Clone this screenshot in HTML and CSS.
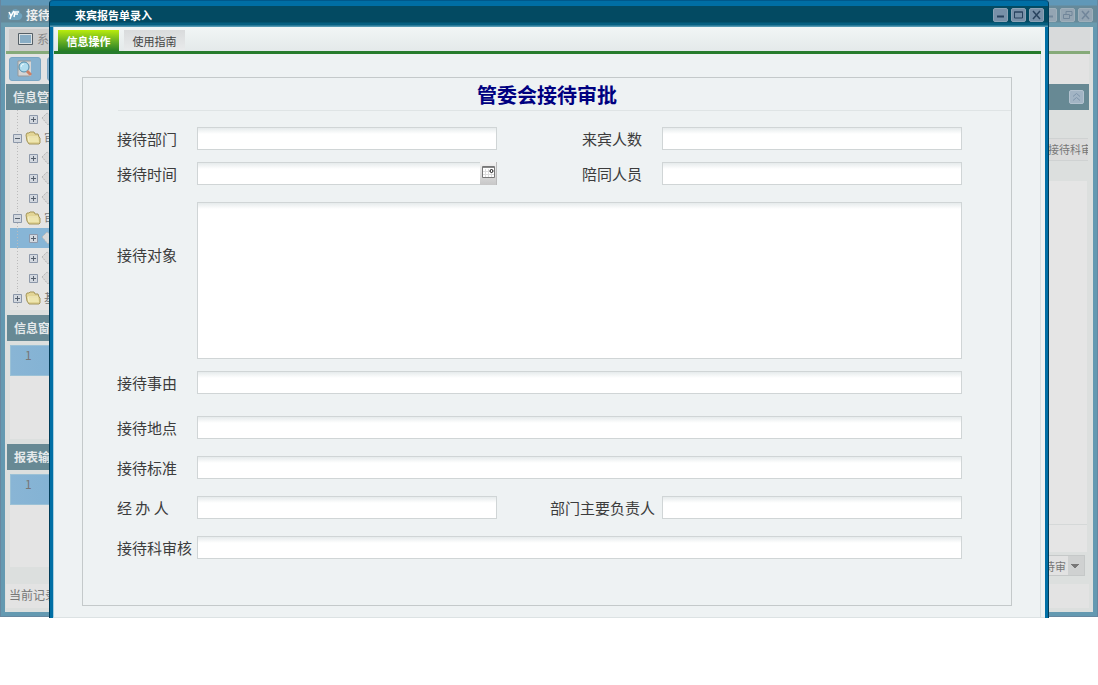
FILE: index.html
```html
<!DOCTYPE html>
<html lang="zh-CN">
<head>
<meta charset="utf-8">
<title>来宾报告单录入</title>
<link rel="stylesheet" href="styles.css">
</head>
<body>
<svg class="defs" aria-hidden="true">
  <symbol id="folder" viewBox="0 0 16 14"><path d="M2 10L1 4l1-2h2l1-1h4l1 2h3l1 3 1 1v5l-1 1H4z" fill="#e2d596" stroke="#a5965a"/><path d="M3 7h10l1 4H4z" fill="#eee6b0"/><path d="M4 11L3 6h10" fill="none" stroke="#f4efc8"/></symbol>
  <symbol id="plus" viewBox="0 0 9 9"><path d="M.5.5h8v8h-8z" fill="#d3d8df" stroke="#8d98aa"/><path d="M2 4.500h5M4.500 2v5" stroke="#56606e"/></symbol>
  <symbol id="minus" viewBox="0 0 9 9"><path d="M.5.5h8v8h-8z" fill="#d3d8df" stroke="#8d98aa"/><path d="M2 4.500h5" stroke="#56606e"/></symbol>
  <symbol id="leaf" viewBox="0 0 14 14"><path d="M1 6l5-5 7 5-6 7z" fill="#d9d9d9" stroke="#b5b5b5" stroke-dasharray="2 1"/></symbol>
  <symbol id="min" viewBox="0 0 15 14"><path d="M4 8.500h7" stroke="currentColor" stroke-width="2"/></symbol>
  <symbol id="max" viewBox="0 0 15 14"><path d="M3.500 4h8v6h-8zM3 4h9" fill="none" stroke="currentColor"/></symbol>
  <symbol id="restore" viewBox="0 0 15 14"><path d="M3.500 6.500h6v4h-6zM6 6V3.500h6v4h-2" fill="none" stroke="currentColor"/></symbol>
  <symbol id="close" viewBox="0 0 15 14"><path d="M4 3l7 8M11 3l-7 8" stroke="currentColor" stroke-width="1.500"/></symbol>
</svg>
<main class="desktop">
  <section class="app" aria-label="接待">
    <header class="app-title">
      <svg class="logo" viewBox="0 0 16 13"><path d="M3 12Q0 11 1 7q0-3 3-3 3-5 7-2 2 0 2 3 3 1 2 4-1 3-4 3z" fill="#6fa3bf"/><path d="M2 4l2 4 3-5M4 8l-1 3M7 9l1-5h4M8 6h3" fill="none" stroke="#fff" stroke-width="1.500"/></svg>
      <span class="app-name">接待</span>
      <div class="controls">
        <button aria-label="最小化"><svg><use href="#min"/></svg></button>
        <button aria-label="还原"><svg><use href="#restore"/></svg></button>
        <button aria-label="关闭"><svg><use href="#close"/></svg></button>
      </div>
    </header>
    <div class="app-body">
      <nav class="app-tabs"><a href="#"><svg class="monitor" viewBox="0 0 15 12"><path d="M.5.5h14v11H.5z" fill="#dce1e3" stroke="#555f66"/><path d="M2 2h11v8H2z" fill="#89adc5"/></svg>系统</a></nav>
      <div class="toolbar">
        <button aria-label="查询"><svg class="search" viewBox="0 0 18 18"><path d="M2 1h13v15H2z" fill="#d5d5d5"/><path d="M2 16V1h13M2 16h11" fill="none" stroke="#999"/><circle cx="8" cy="7" r="5" fill="#b0dcee" stroke="#508cab"/><path d="M5 7q0-3 3-3" fill="none" stroke="#e6f6fb"/><path d="M11 11l4 4" stroke="#cb8066" stroke-width="3"/></svg></button>
        <button aria-label="工具"></button>
      </div>
      <div class="panels">
        <aside class="side">
          <h2 class="bar">信息管理</h2>
          <ul class="tree">
            <li class="child"><svg class="box"><use href="#plus"/></svg><svg class="leaf"><use href="#leaf"/></svg></li>
            <li><svg class="box"><use href="#minus"/></svg><svg class="folder"><use href="#folder"/></svg>审批</li>
            <li class="child"><svg class="box"><use href="#plus"/></svg><svg class="leaf"><use href="#leaf"/></svg></li>
            <li class="child"><svg class="box"><use href="#plus"/></svg><svg class="leaf"><use href="#leaf"/></svg></li>
            <li class="child"><svg class="box"><use href="#plus"/></svg><svg class="leaf"><use href="#leaf"/></svg></li>
            <li><svg class="box"><use href="#minus"/></svg><svg class="folder"><use href="#folder"/></svg>审批</li>
            <li class="child selected"><svg class="box"><use href="#plus"/></svg><svg class="leaf"><use href="#leaf"/></svg></li>
            <li class="child"><svg class="box"><use href="#plus"/></svg><svg class="leaf"><use href="#leaf"/></svg></li>
            <li class="child"><svg class="box"><use href="#plus"/></svg><svg class="leaf"><use href="#leaf"/></svg></li>
            <li><svg class="box"><use href="#plus"/></svg><svg class="folder"><use href="#folder"/></svg>基础</li>
          </ul>
          <h2 class="bar inset">信息窗口</h2>
          <div class="list"><div class="list-row">1</div></div>
          <h2 class="bar inset">报表输出</h2>
          <div class="list"><div class="list-row">1</div></div>
        </aside>
        <section class="work">
          <div class="bar work-bar"><button aria-label="收起"><svg viewBox="0 0 15 14"><path d="M4 6.500l3.500-3 3.500 3M4 10.500l3.500-3 3.500 3" fill="none" stroke="currentColor"/></svg></button></div>
          <div class="column-head"><span>接待科审</span></div>
          <div class="records"></div>
          <div class="summary"></div>
          <div class="filter"><select aria-label="状态"><option>待审</option></select></div>
        </section>
      </div>
      <footer class="status">当前记录</footer>
    </div>
  </section>

  <section class="dialog" role="dialog" aria-labelledby="dialog-title">
    <header class="dialog-title">
      <h1 id="dialog-title">来宾报告单录入</h1>
      <div class="controls">
        <button aria-label="最小化"><svg><use href="#min"/></svg></button>
        <button aria-label="最大化"><svg><use href="#max"/></svg></button>
        <button aria-label="关闭"><svg><use href="#close"/></svg></button>
      </div>
    </header>
    <div class="dialog-body">
      <nav class="tabs">
        <button class="tab active">信息操作</button>
        <button class="tab">使用指南</button>
      </nav>
      <form class="sheet">
        <h2>管委会接待审批</h2>
        <div class="fields">
          <div class="row">
            <label for="dept">接待部门</label><input id="dept" type="text">
            <label class="second" for="count">来宾人数</label><input id="count" type="text">
          </div>
          <div class="row gap-s">
            <label for="time">接待时间</label>
            <div class="date"><input id="time" type="text"><button type="button" aria-label="选择日期"><svg viewBox="0 0 13 13"><path d="M.5.5h12v11H.5z" fill="#fff" stroke="#777"/><path d="M1 1.500h11" stroke="#888"/><path d="M3.500 3v8M6.500 3v8M9.500 7v4M1 5.500h7M1 8.500h11" stroke="#ddd"/><circle cx="9.500" cy="5" r="1.500" fill="#fff" stroke="#111"/></svg></button></div>
            <label class="second" for="escort">陪同人员</label><input id="escort" type="text">
          </div>
          <div class="row wide gap-m"><label class="top" for="target">接待对象</label><textarea id="target"></textarea></div>
          <div class="row wide gap-s"><label for="reason">接待事由</label><input id="reason" type="text"></div>
          <div class="row wide gap-l"><label for="place">接待地点</label><input id="place" type="text"></div>
          <div class="row wide gap-m"><label for="standard">接待标准</label><input id="standard" type="text"></div>
          <div class="row gap-m">
            <label for="agent">经 办 人</label><input id="agent" type="text">
            <label class="second long" for="leader">部门主要负责人</label><input id="leader" type="text">
          </div>
          <div class="row wide gap-m"><label for="audit">接待科审核</label><input id="audit" type="text"></div>
        </div>
      </form>
    </div>
  </section>
</main>
</body>
</html>
```

FILE: styles.css
```css
* { box-sizing: border-box; }
body {
  margin: 0;
  background: #fff;
  font: 12px/18px "Noto Sans CJK SC", sans-serif;
  color: #3c3c3c;
}
h1, h2, ul { margin: 0; padding: 0; font-size: inherit; }
button, input, select, textarea { font: inherit; margin: 0; padding: 0; }
svg { display: block; flex: none; }
.defs { display: none; }

/* The dialog shares one grid cell with the dimmed application window. */
.desktop { display: grid; grid-template-columns: minmax(0, 1fr); }
.app, .dialog { grid-area: 1 / 1; }

/* Application window */
.app {
  display: flex;
  flex-direction: column;
  margin-bottom: 1px;
  padding: 0 4px 4px;
  background: #6499b1;
  border: 1px solid #6687a0;
  border-top: 0;
  color: #777;
}
.app-title {
  display: flex;
  align-items: center;
  height: 27px;
  margin: 0 -4px;
  padding: 2px 4px 0 6px;
  background: linear-gradient(#6098b8 0 5px, #668999 6px 22px, #6a9bae 23px);
  color: #eee;
}
.logo { width: 16px; height: 13px; }
.app-name { flex: 1; padding-left: 3px; font-weight: bold; }
.controls { display: flex; gap: 3px; }
.controls button, .work-bar button {
  width: 15px;
  height: 14px;
  border: 1px solid #9eafba;
  border-radius: 2px;
  background: #94a5b3;
  color: #71869a;
}
.controls svg, .work-bar svg { width: 15px; height: 14px; margin: -1px; }
.app-body {
  flex: 1;
  display: flex;
  flex-direction: column;
  padding: 0 4px 4px 1px;
  background: #dcdfde;
}
.app-tabs {
  height: 27px;
  padding-top: 2px;
  margin-right: -1px;
  border-bottom: 3px solid #86aa79;
  background: #d8dadb;
}
.app-tabs a {
  display: flex;
  align-items: center;
  gap: 4px;
  width: 90px;
  height: 22px;
  padding: 0 0 2px 9px;
  margin-left: 3px;
  background: #ccc;
  color: #888;
  text-decoration: none;
}
.monitor { width: 15px; height: 12px; }
.toolbar {
  display: flex;
  gap: 6px;
  height: 30px;
  padding: 3px;
  background: #e3e3e3;
}
.toolbar button {
  display: flex;
  align-items: center;
  justify-content: center;
  width: 32px;
  height: 24px;
  border: 1px solid #78a5c3;
  border-radius: 3px;
  background: #86b1cf;
}
.search { width: 18px; height: 18px; }
.panels { flex: 1; display: grid; grid-template-columns: 120px minmax(0, 1fr); }
.side { display: flex; flex-direction: column; padding-bottom: 13px; }
.bar {
  height: 26px;
  padding-left: 7px;
  background: #678994;
  color: #e5e9eb;
  line-height: 26px;
}
.bar.inset { margin-left: 1px; margin-top: 5px; }
.tree {
  list-style: none;
  margin-left: 4px;
  padding-bottom: 2px;
  background: #e4e4e4;
}
.tree li {
  display: flex;
  align-items: center;
  gap: 3px;
  height: 20px;
  padding-left: 3px;
  background: repeating-linear-gradient(#bbb 0 1px, transparent 1px 3px) 7px 0 / 1px 100% no-repeat;
}
.tree li:first-child { height: 18px; }
.tree .child { padding-left: 19px; }
.tree .selected { background-color: #87b5d6; }
.box { width: 9px; height: 9px; }
.folder { width: 16px; height: 14px; }
.leaf { width: 14px; height: 14px; }
.list {
  flex: 1;
  margin: 4px 0 0 4px;
  background: #e4e4e4;
}
.list-row {
  height: 31px;
  padding-left: 14px;
  border: 1px solid #9bc1d6;
  background: linear-gradient(90deg, #89b5d5, #79aed2);
}
.work { display: flex; flex-direction: column; }
.work-bar { display: flex; justify-content: flex-end; align-items: center; padding-right: 5px; }
.work-bar button { border-color: #b3c2cf; background: #a2b4c4; color: #7e95ab; }
.column-head {
  display: flex;
  justify-content: flex-end;
  height: 23px;
  margin: 28px 1px 0 0;
  border: 1px solid #cfd2d2;
  border-right: 0;
  background: #dcdcdc;
  overflow: hidden;
}
.column-head span { width: 40px; line-height: 21px; font-size: 11px; white-space: nowrap; }
.records {
  flex: 1;
  margin: 20px 2px 0 0;
  border-bottom: 1px solid #d5d8d8;
  background: #e5e5e5;
}
.summary { height: 27px; margin-right: 2px; background: #e5e5e5; }
.filter {
  display: flex;
  justify-content: flex-end;
  padding: 3px 4px 4px 0;
}
.filter select {
  appearance: none;
  width: 60px;
  height: 21px;
  padding-left: 18px;
  border: 1px solid #c5c8c8;
  border-radius: 0;
  background: linear-gradient(45deg, transparent 50%, #777 50%) right 9px center / 4px 4px no-repeat, linear-gradient(-45deg, transparent 50%, #777 50%) right 5px center / 4px 4px no-repeat, linear-gradient(90deg, #e2e2e2 42px, #cfd1d1 42px);
  color: #777;
  font-size: 11px;
}
.status {
  height: 24px;
  margin-top: 4px;
  padding-left: 3px;
  background: #e3e3e3;
  line-height: 22px;
}

/* Dialog */
.dialog {
  z-index: 1;
  margin: 0 49px;
  padding: 0 3px;
  border: solid #003d5a;
  border-width: 0 1px;
  border-radius: 4px 4px 0 0;
  background: #006fa5;
}
.dialog-title {
  display: flex;
  align-items: center;
  justify-content: space-between;
  height: 27px;
  margin: 0 -3px;
  padding: 1px 4px 0 25px;
  border-top: 1px solid #00588a;
  border-radius: 4px 4px 0 0;
  background: linear-gradient(#006ea4 0 5px, #034a62 5px 21px, #065f80 22px 24px, #5398b2 25px);
  color: #fff;
}
.dialog-title h1 { font-size: 11px; }
.dialog .controls button { border-color: #8ba2b5; background: #7890a8; color: #29435e; }
.dialog-body {
  padding-bottom: 11px;
  border-left: 1px solid #a9cedd;
  border-bottom: 1px solid #dce2e3;
  background: linear-gradient(90deg, #d7dfe1 1px, transparent 1px) right / 5px 100% no-repeat #eef2f3;
}
.tabs {
  display: flex;
  align-items: flex-end;
  gap: 5px;
  height: 27px;
  margin-right: 4px;
  padding-left: 4px;
  border-bottom: 3px solid #267c2c;
  background: linear-gradient(#f1f5f5, #e4e9ea);
}
.tab {
  width: 61px;
  height: 21px;
  border: 0;
  background: linear-gradient(#d9dbdc, #e9ebec);
  color: #444;
  font-size: 11px;
}
.tab.active {
  background: linear-gradient(#b9ec0b, #66ae23 55%, #267f25);
  color: #fff;
  font-weight: bold;
}
.sheet {
  margin: 23px 33px 0 28px;
  border: 1px solid #c4c9ca;
}
.sheet h2 {
  height: 33px;
  margin-left: 35px;
  padding-right: 35px;
  border-bottom: 1px solid #dfe4e5;
  color: #000080;
  font-size: 20px;
  line-height: 34px;
  text-align: center;
}
.fields { padding: 16px 49px 46px 34px; font-size: 15px; }
.row {
  display: grid;
  grid-template-columns: 80px minmax(0, 1fr) 165px minmax(0, 1fr);
  align-items: start;
}
.row.wide { grid-template-columns: 80px minmax(0, 1fr); }
.gap-s { margin-top: 12px; }
.gap-m { margin-top: 17px; }
.gap-l { margin-top: 22px; }
.row label { line-height: 23px; white-space: nowrap; }
.row .second { padding-left: 85px; }
.row .second.long { padding-left: 53px; }
.row .top { padding-top: 41px; }
.row input, .row textarea {
  display: block;
  width: 100%;
  height: 23px;
  padding: 0 4px;
  border: 1px solid #d0d5d6;
  border-radius: 0;
  outline: 0;
  background: linear-gradient(#e6ebec, #fff 6px);
}
.row textarea { height: 157px; resize: none; }
.date { display: flex; }
.date input { flex: 1; min-width: 0; border-right: 0; }
.date button {
  display: flex;
  justify-content: center;
  width: 17px;
  height: 23px;
  padding-top: 4px;
  border: 0;
  border-right: 1px solid #bbb;
  background: linear-gradient(#f3f3f3, #c7c7c7);
}
.date svg { width: 13px; height: 13px; }
```
